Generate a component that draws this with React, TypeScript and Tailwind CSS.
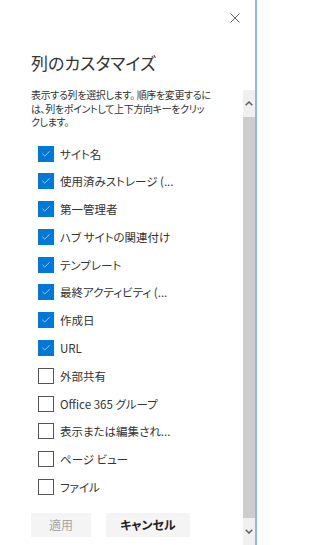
import { Check } from 'lucide-react'

const columns: { label: string; checked: boolean }[] = [
  { label: 'サイト名', checked: true },
  { label: '使用済みストレージ (...', checked: true },
  { label: '第一管理者', checked: true },
  { label: 'ハブ サイトの関連付け', checked: true },
  { label: 'テンプレート', checked: true },
  { label: '最終アクティビティ (...', checked: true },
  { label: '作成日', checked: true },
  { label: 'URL', checked: true },
  { label: '外部共有', checked: false },
  { label: 'Office 365 グループ', checked: false },
  { label: '表示または編集され...', checked: false },
  { label: 'ページ ビュー', checked: false },
  { label: 'ファイル', checked: false },
]

function Box({ checked }: { checked: boolean }) {
  if (checked) {
    return (
      <span className="flex h-[16px] w-[16px] shrink-0 items-center justify-center bg-[#0078d7]">
        <Check size={10} strokeWidth={1.5} className="text-white" />
      </span>
    )
  }
  return <span className="h-[16px] w-[16px] shrink-0 border border-[#555] bg-white" />
}

function Chevron({ up }: { up?: boolean }) {
  return (
    <svg width="8" height="5" viewBox="0 0 8 5" className="text-[#606060]">
      <path
        d={up ? 'M0.7 4.3 L4 1 L7.3 4.3' : 'M0.7 0.7 L4 4 L7.3 0.7'}
        fill="none"
        stroke="currentColor"
        strokeWidth="1.5"
      />
    </svg>
  )
}

export default function App() {
  return (
    <div className="flex h-[545px] w-[259px] bg-white font-['Noto_Sans_CJK_JP',sans-serif] text-[#333] [font-feature-settings:'palt']">
      <div className="flex min-w-0 flex-1 flex-col">
        <div className="h-[90px] shrink-0">
          <div className="flex justify-end pr-[15px] pt-[13px]">
            <svg width="10" height="10" viewBox="0 0 10 10" className="text-[#666]">
              <path d="M0.5 0.5 L9.5 9.5 M9.5 0.5 L0.5 9.5" stroke="currentColor" strokeWidth="1" />
            </svg>
          </div>
          <h1 className="pl-[31px] pt-[28px] text-[17px] font-normal leading-[24px] text-[#333]">
            列のカスタマイズ
          </h1>
        </div>
        <div className="flex min-h-0 flex-1">
          <div className="flex min-w-0 flex-1 flex-col">
            <p className="-mt-[2px] whitespace-nowrap pl-[31px] text-[10px] leading-[13.5px] tracking-[-0.35px] text-[#333]">
              表示する列を選択します。 順序を変更するに
              <br />
              は、列をポイントして上下方向キーをクリッ
              <br />
              クします。
            </p>
            <ul className="mt-[17px] flex flex-col gap-[11.8px] pl-[38px]">
              {columns.map((c) => (
                <li key={c.label} className="flex h-[16px] items-center gap-[6px]">
                  <Box checked={c.checked} />
                  <span className="whitespace-nowrap text-[11.5px] leading-[16px]">{c.label}</span>
                </li>
              ))}
            </ul>
            <div className="mt-[18px] flex gap-[15px] pl-[31px]">
              <button className="h-[24px] w-[60px] bg-[#f4f4f4] text-[12px] text-[#a6a6a6]">適用</button>
              <button className="h-[24px] w-[84px] bg-[#f4f4f4] text-[12px] font-semibold text-[#222]">
                キャンセル
              </button>
            </div>
          </div>
          <div className="flex w-[12px] shrink-0 flex-col bg-[#f0f0f0]">
            <div className="flex h-[27px] items-center justify-center">
              <Chevron up />
            </div>
            <div className="flex-1 bg-[#cdcdcd]" />
            <div className="flex h-[27px] items-center justify-center">
              <Chevron />
            </div>
          </div>
        </div>
      </div>
      <div className="w-[2px] shrink-0 bg-[#8fb8e3]" />
      <div className="w-[2px] shrink-0 bg-white" />
    </div>
  )
}
